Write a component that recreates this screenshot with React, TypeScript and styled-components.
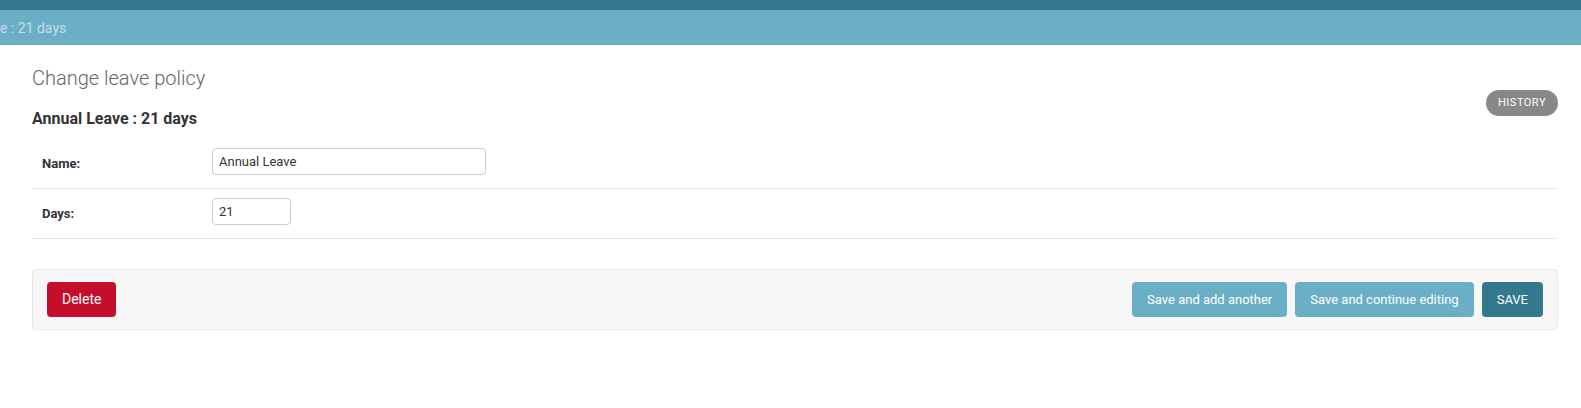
import React from "react";
import styled, { createGlobalStyle } from "styled-components";

const GlobalStyle = createGlobalStyle`
  html, body {
    margin: 0;
    padding: 0;
    background: #ffffff;
  }
  body {
    font-family: Roboto, "Liberation Sans", Arial, sans-serif;
    font-size: 14px;
    color: #333333;
  }
  * { box-sizing: border-box; }
`;

const Page = styled.div`
  display: flex;
  flex-direction: column;
  width: 100%;
`;

const TopBar = styled.div`
  height: 10px;
  background: #33788d;
`;

const Breadcrumbs = styled.nav`
  height: 35px;
  padding: 10px 0 0 0;
  background: #6bafc6;
  color: #c4dce8;
  font-size: 14px;
  line-height: 16px;
  white-space: nowrap;
`;

const Content = styled.main`
  padding: 21px 23px 20px 32px;
  display: flex;
  flex-direction: column;
`;

const Header = styled.div`
  display: flex;
  align-items: flex-start;
  justify-content: space-between;
`;

const Titles = styled.div`
  display: flex;
  flex-direction: column;
`;

const Title = styled.h1`
  margin: 0 0 19px 0;
  font-size: 20px;
  line-height: 24px;
  font-weight: 300;
  color: #666666;
`;

const Subtitle = styled.h2`
  margin: 0 0 10px 0;
  font-size: 16px;
  line-height: 20px;
  font-weight: 700;
  color: #333333;
`;

const ObjectTools = styled.ul`
  list-style: none;
  margin: 24px 0 0 0;
  padding: 0;
  display: flex;
`;

const ToolLink = styled.a`
  display: block;
  padding: 3px 12px;
  line-height: 20px;
  font-size: 11px;
  font-weight: 400;
  letter-spacing: 0.5px;
  text-transform: uppercase;
  color: #ffffff;
  background: #888888;
  border-radius: 15px;
  text-decoration: none;
  cursor: pointer;
`;

const Fieldset = styled.fieldset`
  border: none;
  margin: 0 0 30px 0;
  padding: 0;
  min-width: 0;
`;

const FormRow = styled.div`
  display: flex;
  align-items: flex-start;
  padding: 9px 10px 13px 10px;
  border-bottom: 1px solid #e8e8e8;
`;

const Label = styled.label`
  width: 170px;
  flex: none;
  padding: 8px 10px 0 0;
  font-size: 13px;
  font-weight: 700;
  color: #333333;
`;

const TextInput = styled.input<{ $width: number }>`
  width: ${(p) => p.$width}px;
  height: 27px;
  margin: 0;
  padding: 5px 6px;
  border: 1px solid #cccccc;
  border-radius: 4px;
  font-family: Roboto, "Liberation Sans", Arial, sans-serif;
  font-size: 13px;
  color: #333333;
  background: #ffffff;
  outline: none;
`;

const SubmitRow = styled.div`
  display: flex;
  align-items: center;
  gap: 8px;
  padding: 12px 14px;
  background: #f7f7f7;
  border: 1px solid #e8e8e8;
  border-radius: 4px;
`;

const Spacer = styled.div`
  flex: 1;
`;

const DeleteLink = styled.a`
  display: block;
  height: 35px;
  padding: 0 15px;
  line-height: 35px;
  font-size: 14px;
  color: #ffffff;
  background: #c40e2b;
  border-radius: 4px;
  text-decoration: none;
  cursor: pointer;
`;

const SubmitButton = styled.button<{ $primary?: boolean }>`
  height: 35px;
  padding: 0 15px;
  border: none;
  border-radius: 4px;
  font-family: Roboto, "Liberation Sans", Arial, sans-serif;
  font-size: 13px;
  line-height: 35px;
  color: #ffffff;
  background: ${(p) => (p.$primary ? "#33788d" : "#6bafc6")};
  cursor: pointer;
`;

export default function App() {
  return (
    <>
      <GlobalStyle />
      <Page>
        <TopBar />
        <Breadcrumbs>e : 21 days</Breadcrumbs>
        <Content>
          <Header>
            <Titles>
              <Title>Change leave policy</Title>
              <Subtitle>Annual Leave : 21 days</Subtitle>
            </Titles>
            <ObjectTools>
              <li>
                <ToolLink>History</ToolLink>
              </li>
            </ObjectTools>
          </Header>
          <Fieldset>
            <FormRow>
              <Label htmlFor="id_name">Name:</Label>
              <TextInput id="id_name" $width={274} defaultValue="Annual Leave" />
            </FormRow>
            <FormRow>
              <Label htmlFor="id_days">Days:</Label>
              <TextInput id="id_days" $width={79} defaultValue="21" />
            </FormRow>
          </Fieldset>
          <SubmitRow>
            <DeleteLink>Delete</DeleteLink>
            <Spacer />
            <SubmitButton>Save and add another</SubmitButton>
            <SubmitButton>Save and continue editing</SubmitButton>
            <SubmitButton $primary>SAVE</SubmitButton>
          </SubmitRow>
        </Content>
      </Page>
    </>
  );
}
